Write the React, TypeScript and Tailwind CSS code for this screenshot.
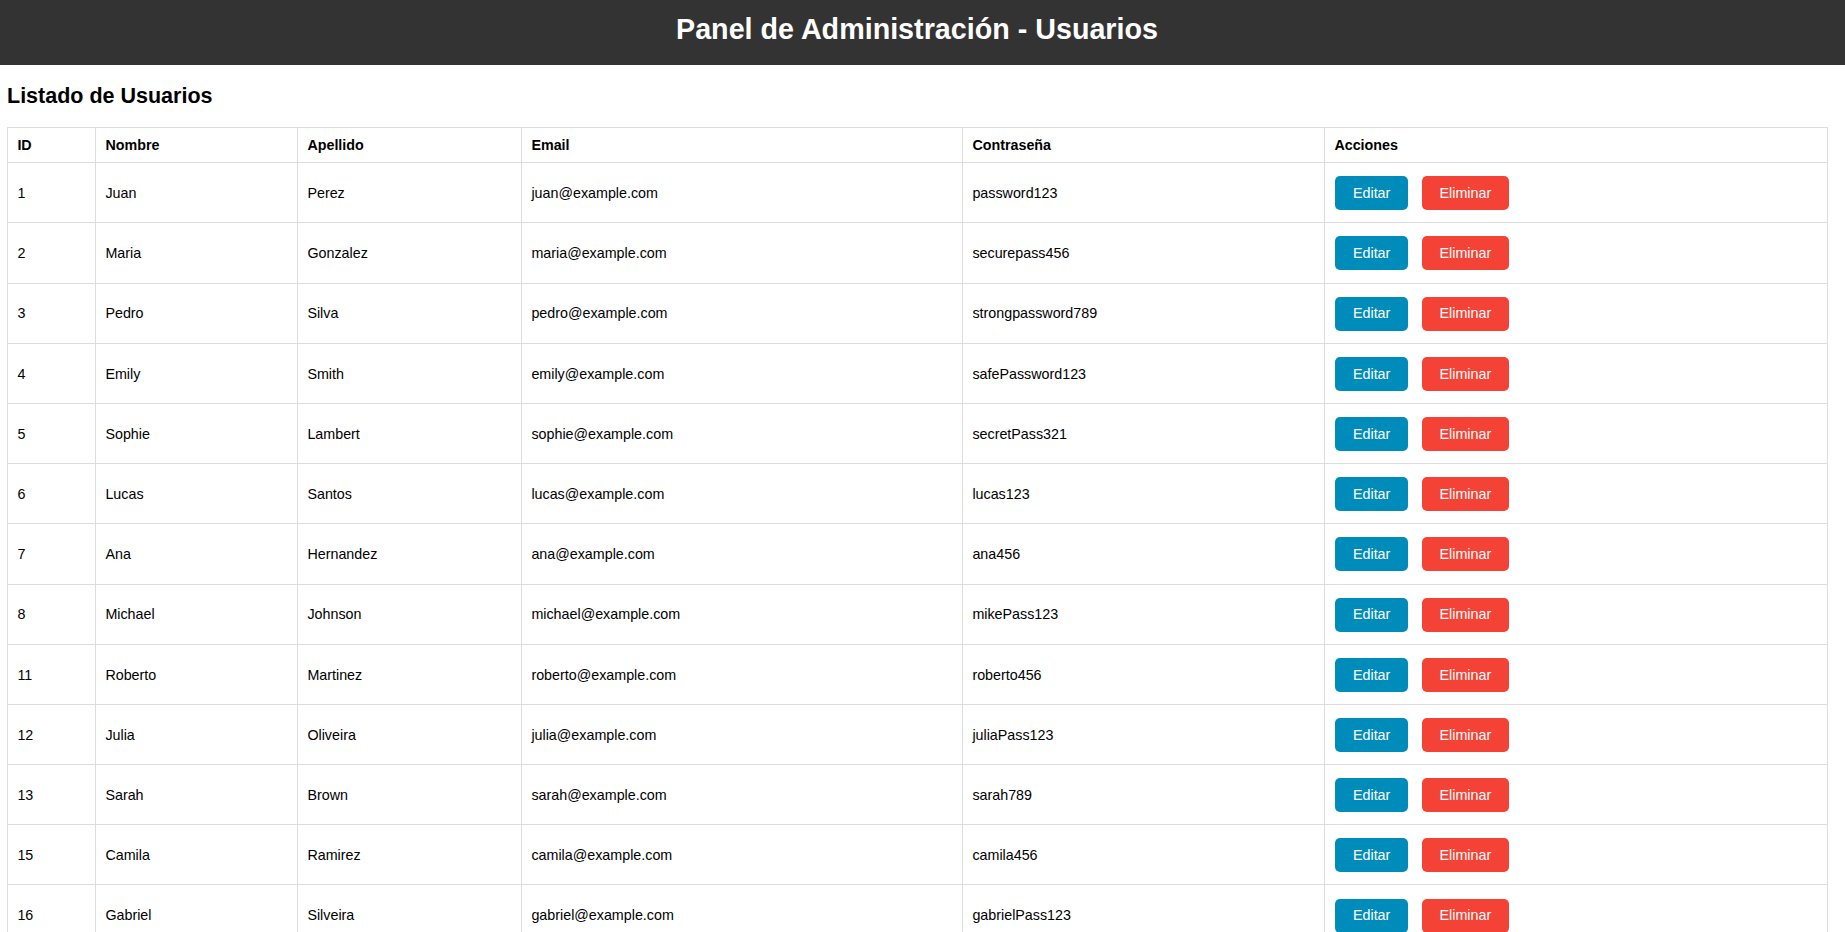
const users = [
  { id: 1, nombre: "Juan", apellido: "Perez", email: "juan@example.com", password: "password123" },
  { id: 2, nombre: "Maria", apellido: "Gonzalez", email: "maria@example.com", password: "securepass456" },
  { id: 3, nombre: "Pedro", apellido: "Silva", email: "pedro@example.com", password: "strongpassword789" },
  { id: 4, nombre: "Emily", apellido: "Smith", email: "emily@example.com", password: "safePassword123" },
  { id: 5, nombre: "Sophie", apellido: "Lambert", email: "sophie@example.com", password: "secretPass321" },
  { id: 6, nombre: "Lucas", apellido: "Santos", email: "lucas@example.com", password: "lucas123" },
  { id: 7, nombre: "Ana", apellido: "Hernandez", email: "ana@example.com", password: "ana456" },
  { id: 8, nombre: "Michael", apellido: "Johnson", email: "michael@example.com", password: "mikePass123" },
  { id: 11, nombre: "Roberto", apellido: "Martinez", email: "roberto@example.com", password: "roberto456" },
  { id: 12, nombre: "Julia", apellido: "Oliveira", email: "julia@example.com", password: "juliaPass123" },
  { id: 13, nombre: "Sarah", apellido: "Brown", email: "sarah@example.com", password: "sarah789" },
  { id: 15, nombre: "Camila", apellido: "Ramirez", email: "camila@example.com", password: "camila456" },
  { id: 16, nombre: "Gabriel", apellido: "Silveira", email: "gabriel@example.com", password: "gabrielPass123" },
];

const headers = ["ID", "Nombre", "Apellido", "Email", "Contraseña", "Acciones"];
const widths = ["w-[88px]", "w-[202px]", "w-[224px]", "w-[441px]", "w-[362px]", "w-[503px]"];

export default function App() {
  return (
    <div className="min-h-screen bg-white text-black font-['Liberation_Sans',Arial,sans-serif] text-[14.3px]">
      <header className="h-[65px] bg-[#333333] pt-[13px] pr-[11px] text-center">
        <h1 className="text-[28.7px] font-bold leading-[33px] text-white">Panel de Administración - Usuarios</h1>
      </header>
      <main className="pl-[7px]">
        <h2 className="mt-[18.5px] mb-[19px] text-[21.5px] font-bold leading-[24.7px]">Listado de Usuarios</h2>
        <table className="w-[1820px] table-fixed border-collapse border border-[#dddddd]">
          <thead>
            <tr className="h-[35px]">
              {headers.map((h, i) => (
                <th key={h} className={`${widths[i]} border border-[#dddddd] px-[9.4px] text-left font-bold leading-[16.4px]`}>
                  {h}
                </th>
              ))}
            </tr>
          </thead>
          <tbody>
            {users.map((u) => (
              <tr key={u.id} className="h-[60.2px]">
                <td className="border border-[#dddddd] px-[9.4px] pt-[2px]">{u.id}</td>
                <td className="border border-[#dddddd] px-[9.4px] pt-[2px]">{u.nombre}</td>
                <td className="border border-[#dddddd] px-[9.4px] pt-[2px]">{u.apellido}</td>
                <td className="border border-[#dddddd] px-[9.4px] pt-[2px]">{u.email}</td>
                <td className="border border-[#dddddd] px-[9.4px] pt-[2px]">{u.password}</td>
                <td className="border border-[#dddddd] px-[9.4px]">
                  <div className="mt-[1px] ml-[1px] flex gap-[14px]">
                    <button className="h-[34px] rounded-[5px] bg-[#008cba] px-[17.6px] leading-[16.4px] text-white">Editar</button>
                    <button className="h-[34px] rounded-[5px] bg-[#f44336] px-[17.6px] leading-[16.4px] text-white">Eliminar</button>
                  </div>
                </td>
              </tr>
            ))}
          </tbody>
        </table>
      </main>
    </div>
  );
}
